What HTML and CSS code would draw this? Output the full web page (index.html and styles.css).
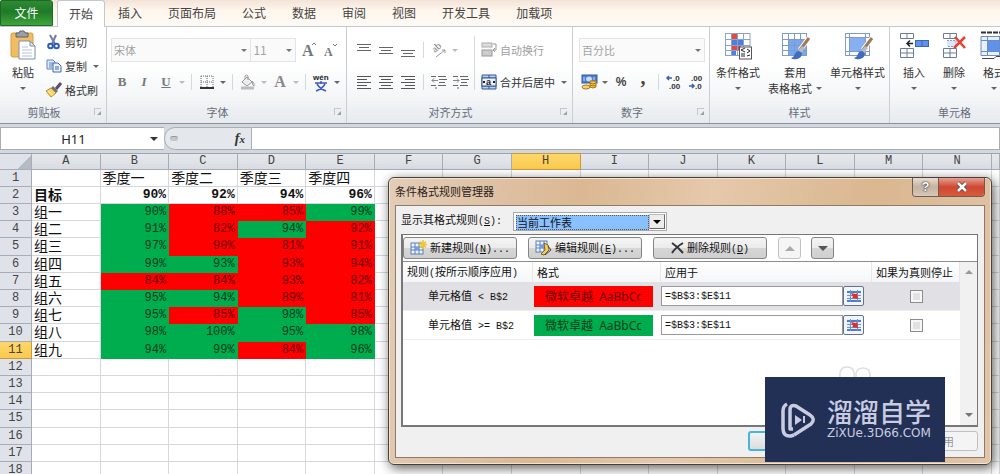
FILE: index.html
```html
<!DOCTYPE html>
<html lang="zh-CN">
<head>
<meta charset="utf-8">
<title>条件格式规则管理器</title>
<link rel="stylesheet" href="styles.css">
</head>
<body>
<nav class="tabs">
  <button class="tab tab-file">文件</button>
  <button class="tab tab-active">开始</button>
  <button class="tab">插入</button>
  <button class="tab">页面布局</button>
  <button class="tab">公式</button>
  <button class="tab">数据</button>
  <button class="tab">审阅</button>
  <button class="tab">视图</button>
  <button class="tab">开发工具</button>
  <button class="tab">加载项</button>
</nav>

<div class="ribbon">
  <section class="group g-clip">
    <div class="tools">
      <button class="big">
        <svg width="28" height="30" viewBox="0 0 28 30"><rect x="2" y="3" width="22" height="24" rx="2" fill="#f0bd62" stroke="#d79a3c"/><path d="M7 3h3l1-2h4l1 2h3v4H7z" fill="#9aa0a8" stroke="#5c636d"/><path d="M10 11h11l5 5v13H10z" fill="#fff" stroke="#7d8fae"/><path d="M21 11v5h5z" fill="#dfe7f4" stroke="#7d8fae"/><path d="M13 17h6M13 20h10M13 23h10M13 26h10" stroke="#b3c3de"/></svg>
        <span>粘贴</span><i class="caret"></i>
      </button>
      <div class="stack">
        <button class="item"><svg width="16" height="16" viewBox="0 0 16 16"><path d="M4 1l5 9M10 1L6 10" stroke="#6c7f9f" stroke-width="2"/><circle cx="4.500" cy="12" r="2.300" fill="none" stroke="#2c5cb4" stroke-width="2"/><circle cx="10.500" cy="12" r="2.300" fill="none" stroke="#2c5cb4" stroke-width="2"/></svg>剪切</button>
        <button class="item"><svg width="16" height="16" viewBox="0 0 16 16"><path d="M1 2h6l2 2v7H1z" fill="#dfeafc" stroke="#5f83c0"/><path d="M3 5h4M3 7h4M3 9h3" stroke="#5f83c0"/><path d="M7 5h5l3 3v6H7z" fill="#eef4ff" stroke="#3f68b0"/><path d="M9 9h4M9 11h4" stroke="#3f68b0"/></svg>复制<i class="caret"></i></button>
        <button class="item"><svg width="16" height="16" viewBox="0 0 16 16"><path d="M15 1l-5 6" stroke="#5b4a6e" stroke-width="3"/><path d="M7 4l5 5-2 2-5-5z" fill="#6d7280"/><path d="M5 6l5 5-5 4-5-6z" fill="#f5d667" stroke="#b98e2a"/><path d="M2 9l5 4" stroke="#fff3b8"/></svg>格式刷</button>
      </div>
    </div>
    <footer class="cap">剪贴板<i class="launch"></i></footer>
  </section>

  <section class="group g-font">
    <div class="tools rows">
      <div class="row">
        <div class="combo c-name"><select aria-label="字体" disabled><option>宋体</option></select></div>
        <div class="combo c-size"><select aria-label="字号" disabled><option>11</option></select></div>
        <button class="ib grow-a" aria-label="增大字号"><svg width="18" height="20" viewBox="0 0 18 20"><text class="serif" x="2" y="16" font-size="16">A</text><path d="M12 5l2-2 2 2" fill="none" stroke="#777"/></svg></button>
        <button class="ib" aria-label="减小字号"><svg width="16" height="20" viewBox="0 0 16 20"><text class="serif" x="1" y="16" font-size="12">A</text><path d="M10 4l2 2 2-2" fill="none" stroke="#777"/></svg></button>
      </div>
      <div class="row">
        <button class="ib letter b">B</button>
        <button class="ib letter i">I</button>
        <button class="ib letter u">U</button>
        <i class="caret cw dim"></i><i class="vs"></i>
        <button class="ib" aria-label="边框"><svg width="14" height="14" viewBox="0 0 14 14"><path d="M1 1h12M1 7h12M1 1v11M7 1v11M13 1v11" stroke="#666" stroke-dasharray="1 1" fill="none"/><path d="M0 13h14" stroke="#333" stroke-width="2"/></svg></button>
        <i class="caret cw"></i><i class="vs"></i>
        <button class="ib" aria-label="填充颜色"><svg width="16" height="16" viewBox="0 0 16 16"><path d="M2 8l5-5 5 5-5 4z" fill="#eee" stroke="#999"/><path d="M5 5V2q2-2 3 0v4M12 7q3 2 2 5-2-1-2-5" fill="none" stroke="#999"/><path d="M1 14h13" stroke="#bbb" stroke-width="3"/></svg></button>
        <i class="caret cw dim"></i>
        <button class="ib letter a">A</button>
        <i class="caret cw dim"></i><i class="vs"></i>
        <button class="ib" aria-label="拼音"><svg width="18" height="20" viewBox="0 0 18 20"><text class="pin" x="1" y="8" font-size="8">wén</text><path d="M3 11h12M9 9v3M5 12q3 5 9 7M13 12q-3 5-9 7" fill="none" stroke="#3c59c8" stroke-width="1.500"/></svg></button>
        <i class="caret cw"></i>
      </div>
    </div>
    <footer class="cap">字体<i class="launch"></i></footer>
  </section>

  <section class="group g-align">
    <div class="tools pair">
      <div class="rows">
        <div class="row">
          <button class="ib" aria-label="顶端对齐"><svg width="14" height="16" viewBox="0 0 14 16"><path d="M0 2.500h14M2 5.500h10M0 8.500h14" stroke="#666"/></svg></button>
          <button class="ib" aria-label="垂直居中"><svg width="14" height="16" viewBox="0 0 14 16"><path d="M0 5.500h14M2 8.500h10M0 11.500h14" stroke="#666"/></svg></button>
          <button class="ib" aria-label="底端对齐"><svg width="14" height="16" viewBox="0 0 14 16"><path d="M0 8.500h14M2 11.500h10M0 14.500h14" stroke="#666"/></svg></button>
          <i class="vs"></i>
          <button class="ib" aria-label="方向"><svg width="18" height="20" viewBox="0 0 18 20"><text class="ab" x="3" y="10" font-size="10" transform="rotate(-42 8 9)">ab</text><path d="M6 17l9-7m-3 0h3v3" fill="none" stroke="#999"/></svg></button>
          <i class="caret cw dim"></i>
        </div>
        <div class="row">
          <button class="ib" aria-label="左对齐"><svg width="14" height="14" viewBox="0 0 14 14"><path d="M0 1.500h14M0 4.500h10M0 7.500h14M0 10.500h10M0 13.500h14" stroke="#555"/></svg></button>
          <button class="ib" aria-label="居中"><svg width="14" height="14" viewBox="0 0 14 14"><path d="M0 1.500h14M2 4.500h10M0 7.500h14M2 10.500h10M0 13.500h14" stroke="#555"/></svg></button>
          <button class="ib" aria-label="右对齐"><svg width="14" height="14" viewBox="0 0 14 14"><path d="M0 1.500h14M4 4.500h10M0 7.500h14M4 10.500h10M0 13.500h14" stroke="#555"/></svg></button>
          <i class="vs"></i>
          <button class="ib" aria-label="减少缩进"><svg width="16" height="14" viewBox="0 0 16 14"><path d="M0 1.500h5M7 1.500h8M8 4.500h8M8 7.500h6M7 10.500h8M0 10.500h5M5 12v2" stroke="#666"/><path d="M7 5.500H1m2-2l-2 2 2 2" fill="none" stroke="#888"/></svg></button>
          <button class="ib" aria-label="增加缩进"><svg width="16" height="14" viewBox="0 0 16 14"><path d="M0 1.500h5M7 1.500h8M8 4.500h8M8 7.500h6M7 10.500h8M0 10.500h5M5 12v2" stroke="#666"/><path d="M0 5.500h6m-2-2l2 2-2 2" fill="none" stroke="#888"/></svg></button>
        </div>
      </div>
      <i class="tall"></i>
      <div class="rows">
        <button class="item off"><svg width="16" height="16" viewBox="0 0 16 16"><rect x="1" y="1" width="10" height="4" fill="#ddd" stroke="#aaa"/><rect x="1" y="8" width="10" height="6" fill="#ccc" stroke="#999"/><path d="M12 2h3v6h-3m2-2l-2 2 2 2" fill="none" stroke="#999"/></svg>自动换行</button>
        <button class="item"><svg width="16" height="16" viewBox="0 0 16 16"><path d="M1 1h14v14H1zM1 4h14M1 12h14M8 1v3M8 12v3" fill="#b9d0f0" stroke="#35598f"/><rect x="1" y="4" width="14" height="8" fill="#eaf2fd" stroke="#35598f"/><text class="pin" x="5" y="11" font-size="9">a</text><path d="M2 8h2M12 8h2" stroke="#222" stroke-width="2"/></svg>合并后居中<i class="caret"></i></button>
      </div>
    </div>
    <footer class="cap">对齐方式<i class="launch"></i></footer>
  </section>

  <section class="group g-num">
    <div class="tools rows">
      <div class="row"><div class="combo c-num"><select aria-label="数字格式" disabled><option>百分比</option></select></div></div>
      <div class="row">
        <button class="ib" aria-label="会计格式"><svg width="17" height="16" viewBox="0 0 17 16"><rect x="1" y="1" width="15" height="8" fill="#4f7ed0" stroke="#2f5aa8"/><ellipse cx="8" cy="5" rx="3" ry="2.500" fill="#c7dbf7"/><path d="M3 3v4M13 3v3" stroke="#c7dbf7"/><ellipse cx="5" cy="13" rx="4" ry="2" fill="#f7d36b" stroke="#a87918"/><path d="M9 7h6v6q-3 2-6 0z" fill="#f5c548" stroke="#a87918"/><path d="M9 9q3 2 6 0M9 11q3 2 6 0" fill="none" stroke="#a87918"/></svg></button>
        <i class="caret cw"></i>
        <button class="ib sym">%</button>
        <button class="ib sym comma">,</button>
        <i class="vs"></i>
        <button class="ib" aria-label="增加小数位数"><svg width="18" height="18" viewBox="0 0 18 18"><text class="dec" x="8" y="8" font-size="8">.0</text><text class="dec" x="4" y="16" font-size="8">.00</text><path d="M7 5H2m2-2L2 5l2 2" fill="none" stroke="#3263b8" stroke-width="1.500"/></svg></button>
        <button class="ib" aria-label="减少小数位数"><svg width="18" height="18" viewBox="0 0 18 18"><text class="dec" x="4" y="8" font-size="8">.00</text><text class="dec" x="8" y="16" font-size="8">.0</text><path d="M2 13h5m-2-2l2 2-2 2" fill="none" stroke="#3263b8" stroke-width="1.500"/></svg></button>
      </div>
    </div>
    <footer class="cap">数字<i class="launch"></i></footer>
  </section>

  <section class="group g-style">
    <div class="tools spread">
      <button class="big">
        <svg width="30" height="30" viewBox="0 0 30 30"><path d="M2 3h25v23H2z" fill="#fff"/><path d="M8 3h7v6H8zM8 15h10v5H8z" fill="#e5483c"/><path d="M8 9h12v6H8zM8 20h5v6H8z" fill="#4d7fe0"/><path d="M2.500 3v23M8.500 3v23M14.500 3v23M20.500 3v23M27 3v23M2 3.500h25M2 9.500h25M2 15.500h25M2 20.500h25M2 25.500h25" stroke="#8aa3cc" fill="none"/><rect x="16.500" y="17" width="12" height="12" fill="#fff" stroke="#555"/><path d="M22 18l-4 2 4 2M18 24h4M18 26h4M24 19l3 2-3 2M24 26l3-1" stroke="#222" fill="none"/></svg>
        <span>条件格式</span><i class="caret"></i>
      </button>
      <button class="big">
        <svg width="30" height="30" viewBox="0 0 30 30"><path d="M2 3h25v23H2z" fill="#fff"/><path d="M8 9h19v17H8z" fill="#79a7ee"/><path d="M2.500 3v23M8.500 3v23M14.500 3v23M20.500 3v23M26.500 3v23M2 3.500h25M2 9.500h25M2 15.500h25M2 20.500h25M2 25.500h25" stroke="#7f9bcb" fill="none"/><path d="M29 8L20 20" stroke="#fff" stroke-width="5"/><path d="M29 8L20 20" stroke="#a07a57" stroke-width="3"/><path d="M22 16l3 2-4 5-3-2z" fill="#bbb"/><path d="M11 28q3-1 4-4t4-3l3 2q0 5-5 6-4 1-6-1" fill="#3f6dc0"/></svg>
        <span>套用</span><span class="two">表格格式<i class="caret"></i></span>
      </button>
      <button class="big">
        <svg width="30" height="30" viewBox="0 0 30 30"><path d="M2 3h25v23H2z" fill="#fff"/><path d="M6 8h17v13H6z" fill="#86b0f2"/><path d="M2.500 3v23M6.500 3v23M22.500 3v23M26.500 3v23M2 3.500h25M2 7.500h25M2 21.500h25M2 25.500h25" stroke="#7f9bcb" fill="none"/><path d="M29 8L20 20" stroke="#fff" stroke-width="5"/><path d="M29 8L20 20" stroke="#a07a57" stroke-width="3"/><path d="M22 16l3 2-4 5-3-2z" fill="#bbb"/><path d="M11 28q3-1 4-4t4-3l3 2q0 5-5 6-4 1-6-1" fill="#3f6dc0"/></svg>
        <span>单元格样式</span><i class="caret"></i>
      </button>
    </div>
    <footer class="cap">样式</footer>
  </section>

  <section class="group g-cell">
    <div class="tools">
      <button class="big w40">
        <svg width="30" height="30" viewBox="0 0 30 30"><path d="M1.500 3.500h13v5h-13zM8 3.500v5M1.500 18.500h13v9h-13zM8 18.500v9M1.500 23h13" fill="#fff" stroke="#6b7c99"/><rect x="16.500" y="10.500" width="13" height="6" fill="#5f92ea" stroke="#3a66b5"/><path d="M23 11v5" stroke="#3a66b5"/><path d="M14 13.500H8m3-3l-3 3 3 3" fill="none" stroke="#222" stroke-width="1.500"/></svg>
        <span>插入</span><i class="caret"></i>
      </button>
      <button class="big w40">
        <svg width="30" height="30" viewBox="0 0 30 30"><path d="M4.500 3.500h13v5h-13zM11 3.500v5M4.500 18.500h13v9h-13zM11 18.500v9M4.500 23h13" fill="#fff" stroke="#6b7c99"/><path d="M8 10.500h9v6H8" fill="#dbe8fb" stroke="#7fa0d8" stroke-dasharray="2 1"/><path d="M16 7l10 11M26 7L15 18" stroke="#e8402f" stroke-width="2.500"/></svg>
        <span>删除</span><i class="caret"></i>
      </button>
      <button class="big w40">
        <svg width="30" height="30" viewBox="0 0 30 30"><path d="M2 2.500h26" stroke="#333" stroke-width="2" stroke-dasharray="5 1"/><path d="M2 6.500h27v19H2z" fill="#e9f1fd" stroke="#6b8cc4"/><rect x="9" y="10" width="11" height="11" fill="#5f92ea"/><path d="M8.500 6v20M20.500 6v20M2 10.500h27M2 21.500h27" stroke="#6b8cc4"/><path d="M3 28.500h12l2-2h8" stroke="#444" fill="none"/></svg>
        <span>格式</span><i class="caret"></i>
      </button>
    </div>
    <footer class="cap">单元格</footer>
  </section>
</div>

<div class="fbar">
  <div class="namebox"><input aria-label="名称框" value="H11"><i class="caret dark"></i></div>
  <div class="fx"><i class="knob"></i><button class="fxb">f<small>x</small></button></div>
  <input class="formula" aria-label="编辑栏">
</div>

<div class="sheet">
<table class="grid">
<colgroup><col class="rh"><col span="14"><col class="edge"></colgroup>
<thead><tr><th class="corner"><th>A<th>B<th>C<th>D<th>E<th>F<th>G<th class="sel">H<th>I<th>J<th>K<th>L<th>M<th>N<th></tr></thead>
<tbody>
<tr><th>1<td><td>季度一<td>季度二<td>季度三<td>季度四<td><td><td><td><td><td><td><td><td><td></tr>
<tr class="goal"><th>2<td>目标<td>90%<td>92%<td>94%<td>96%<td><td><td><td><td><td><td><td><td><td></tr>
<tr><th>3<td>组一<td class="g">90%<td class="r">88%<td class="r">85%<td class="g">99%<td><td><td><td><td><td><td><td><td><td></tr>
<tr><th>4<td>组二<td class="g">91%<td class="r">82%<td class="g">94%<td class="r">92%<td><td><td><td><td><td><td><td><td><td></tr>
<tr><th>5<td>组三<td class="g">97%<td class="r">90%<td class="r">81%<td class="r">91%<td><td><td><td><td><td><td><td><td><td></tr>
<tr><th>6<td>组四<td class="g">99%<td class="g">93%<td class="r">93%<td class="r">94%<td><td><td><td><td><td><td><td><td><td></tr>
<tr><th>7<td>组五<td class="r">84%<td class="r">84%<td class="r">93%<td class="r">82%<td><td><td><td><td><td><td><td><td><td></tr>
<tr><th>8<td>组六<td class="g">95%<td class="g">94%<td class="r">89%<td class="r">81%<td><td><td><td><td><td><td><td><td><td></tr>
<tr><th>9<td>组七<td class="g">95%<td class="r">85%<td class="g">98%<td class="r">85%<td><td><td><td><td><td><td><td><td><td></tr>
<tr><th>10<td>组八<td class="g">98%<td class="g">100%<td class="g">95%<td class="g">98%<td><td><td><td><td><td><td><td><td><td></tr>
<tr><th class="sel">11<td>组九<td class="g">94%<td class="g">99%<td class="r">84%<td class="g">96%<td><td><td><td><td><td><td><td><td><td></tr>
<tr><th>12<td><td><td><td><td><td><td><td><td><td><td><td><td><td><td></tr>
<tr><th>13<td><td><td><td><td><td><td><td><td><td><td><td><td><td><td></tr>
<tr><th>14<td><td><td><td><td><td><td><td><td><td><td><td><td><td><td></tr>
<tr><th>15<td><td><td><td><td><td><td><td><td><td><td><td><td><td><td></tr>
<tr><th>16<td><td><td><td><td><td><td><td><td><td><td><td><td><td><td></tr>
<tr><th>17<td><td><td><td><td><td><td><td><td><td><td><td><td><td><td></tr>
<tr><th>18<td><td><td><td><td><td><td><td><td><td><td><td><td><td><td></tr>
</tbody>
</table>
</div>

<div class="dialog" role="dialog" aria-labelledby="dlg-title">
  <header class="dtitle">
    <span id="dlg-title">条件格式规则管理器</span>
    <div class="winbtns"><button class="help">?</button><button class="close" aria-label="关闭"><svg width="12" height="10" viewBox="0 0 12 10"><path d="M2 1l8 8M10 1L2 9" stroke="#6b3a34" stroke-width="4"/><path d="M2 1l8 8M10 1L2 9" stroke="#fff" stroke-width="2.500"/></svg></button></div>
  </header>
  <div class="dbody">
    <div class="scope">
      <label for="scope">显示其格式规则<span class="lat">(<u>S</u>):</span></label>
      <div class="scopebox"><select id="scope"><option>当前工作表</option></select><i class="drop"></i></div>
    </div>
    <div class="panel">
      <div class="bar">
        <button class="btn"><svg width="17" height="16" viewBox="0 0 17 16"><rect x="1" y="3" width="12" height="11" fill="#eef4ff" stroke="#5d7fb8"/><path d="M1 7h12M1 10h12M5 3v11M9 3v11" stroke="#5d7fb8"/><path d="M5 7h4v3H5z" fill="#6f9be8"/><path d="M13 0v9M9 4.500h8M10 1.500l6 6M16 1.500l-6 6" stroke="#f4c430" stroke-width="1.500"/></svg><span>新建规则<span class="lat">(<u>N</u>)...</span></span></button>
        <button class="btn"><svg width="17" height="16" viewBox="0 0 17 16"><rect x="1" y="1" width="11" height="11" fill="#eef4ff" stroke="#5d7fb8"/><path d="M1 5h11M1 8h11M5 1v11M9 1v11" stroke="#5d7fb8"/><path d="M5 5h4v3H5z" fill="#6f9be8"/><path d="M9 3l4 2 1 5-5 5-3-1 4-4z" fill="#f5cf58" stroke="#7c6430"/><path d="M13 6l3 4-6 5" fill="none" stroke="#444"/></svg><span>编辑规则<span class="lat">(<u>E</u>)...</span></span></button>
        <button class="btn"><svg width="13" height="12" viewBox="0 0 13 12"><path d="M1 1q6 4 11 10M12 1Q5 5 1 11" fill="none" stroke="#333" stroke-width="2"/></svg><span>删除规则<span class="lat">(<u>D</u>)</span></span></button>
        <button class="btn sq up" aria-label="上移" disabled><i></i></button>
        <button class="btn sq down" aria-label="下移"><i></i></button>
      </div>
      <div class="list">
        <table class="rules">
          <colgroup><col class="k1"><col class="k2"><col class="k3"><col class="k4"></colgroup>
          <thead><tr><th>规则<span class="lat">(</span>按所示顺序应用<span class="lat">)</span></th><th>格式</th><th>应用于</th><th>如果为真则停止</th></tr></thead>
          <tbody>
            <tr class="on"><td class="cond">单元格值<span class="lat"> &lt; B$2</span></td><td><div class="sw red">微软卓越&nbsp; AaBbCc</div></td>
              <td><div class="ref"><input aria-label="应用于 1" value="=$B$3:$E$11"><button aria-label="选择区域 1"><svg width="14" height="12" viewBox="0 0 14 12"><rect width="14" height="12" fill="#e8f0fc"/><path d="M0 1h14v2H0zM0 10h14v2H0z" fill="#4b7dd0"/><path d="M0 5.500h14M0 8.500h14M3.500 0v12M10.500 0v12" stroke="#6b93d6"/><path d="M4 3l5 1 1-1 1 6-6-1 1-1z" fill="#e0301e"/></svg></button></div></td>
              <td class="stop"><input type="checkbox" aria-label="如果为真则停止 1"></td></tr>
            <tr><td class="cond">单元格值<span class="lat"> &gt;= B$2</span></td><td><div class="sw green">微软卓越&nbsp; AaBbCc</div></td>
              <td><div class="ref"><input aria-label="应用于 2" value="=$B$3:$E$11"><button aria-label="选择区域 2"><svg width="14" height="12" viewBox="0 0 14 12"><rect width="14" height="12" fill="#e8f0fc"/><path d="M0 1h14v2H0zM0 10h14v2H0z" fill="#4b7dd0"/><path d="M0 5.500h14M0 8.500h14M3.500 0v12M10.500 0v12" stroke="#6b93d6"/><path d="M4 3l5 1 1-1 1 6-6-1 1-1z" fill="#e0301e"/></svg></button></div></td>
              <td class="stop"><input type="checkbox" aria-label="如果为真则停止 2"></td></tr>
          </tbody>
        </table>
        <div class="scroll"><i class="su"></i><i class="sd"></i></div>
      </div>
    </div>
    <footer class="dfoot"><button class="ok" aria-label="确定"></button><button class="apply" disabled>应用</button></footer>
  </div>
</div>

<div class="mark">
  <svg class="ears" width="32" height="11" viewBox="0 0 32 11"><path d="M1 11Q0 1 8 1t7 10M17 11q-1-9 7-9t7 9" fill="none" stroke="#dedede" stroke-width="1.500"/></svg>
  <svg width="36" height="36" viewBox="0 0 36 36"><path d="M7 2Q3 4 3 9v17q0 9 8 8l3-1" fill="none" stroke="#c9cce0" stroke-width="3.500"/><path d="M13 27h-3V8q0-6 6-4l14 9q6 4 1 9L14 33" fill="none" stroke="#c9cce0" stroke-width="3.500" stroke-linejoin="round"/><path d="M15 13l7 5-7 5z" fill="#c9cce0"/><path d="M24 14v7" stroke="#c9cce0" stroke-width="2"/></svg>
  <div class="words"><strong>溜溜自学</strong><span>ZiXUe.3D66.COM</span></div>
</div>
</body>
</html>
```
FILE: styles.css
```css
* { box-sizing: border-box; }
html { height: 100%; }
body {
  margin: 0;
  height: 100vh;
  overflow: hidden;
  position: relative;
  display: flex;
  flex-direction: column;
  background: #d3d8df;
  color: #333;
  font: 11px/14px "Noto Sans CJK SC", sans-serif;
}
button, input, select { font: inherit; color: inherit; margin: 0; padding: 0; border: 0; background: none; border-radius: 0; }
i { font-style: normal; }
svg { display: block; flex: none; overflow: visible; }

/* ribbon tabs */
.tabs { display: flex; flex: none; height: 27px; background: linear-gradient(#f3e3d8, #fff6ec 40%, #fdfaf6); border-bottom: 1px solid #c3c8cf; }
.tab { padding: 0 13px; font-size: 12px; color: #444; }
.tab-file { width: 53px; color: #fff; border-radius: 2px 3px 0 0; background: linear-gradient(#2f8a35, #1f7a28 45%, #3fa53c); border: 1px solid #1c6a25; }
.tab-active { height: 27px; margin-left: 4px; padding: 0 11px; background: #fff; border: 1px solid #c3c8cf; border-bottom: 0; border-radius: 3px 3px 0 0; }

.ribbon { display: flex; flex: none; height: 97px; overflow: hidden; background: linear-gradient(#fff 40%, #f3f5f7 75%, #e6eaee); border-bottom: 1px solid #8b9199; }
.group { flex: none; display: flex; flex-direction: column; border-right: 1px solid #c9ced5; }
.g-clip { width: 107px; }
.g-font { width: 240px; }
.g-align { width: 226px; }
.g-num { width: 137px; }
.g-style { width: 180px; }
.g-cell { width: 130px; }
.tools { flex: 1; display: flex; padding: 3px 4px 0; }
.cap { position: relative; height: 20px; text-align: center; color: #666d78; padding: 2px 18px 0 0; }
.g-style .cap, .g-cell .cap { padding-right: 0; }
.launch { position: absolute; right: 5px; top: 5px; width: 7px; height: 7px; border: 1px solid #c4c8ce; border-right: 0; border-bottom: 0; }
.launch::after { content: ""; position: absolute; right: 0; bottom: 0; border: 2px solid #9aa0a8; border-top-color: transparent; border-left-color: transparent; }

.caret { flex: none; display: inline-block; width: 0; height: 0; border: 3px solid transparent; border-top-color: #666; border-bottom: 0; }
.caret.dim { border-top-color: #bbb; }
.caret.dark { border-width: 4px; border-bottom: 0; border-top-color: #333; }
.caret.cw { margin: 0 2px; }
.vs { flex: none; width: 1px; height: 16px; margin: 0 4px; background: #d5d8dc; }
.tall { flex: none; width: 1px; height: 54px; margin: 9px 6px 0 2px; background: #d5d8dc; }

.big { display: flex; flex-direction: column; align-items: center; white-space: nowrap; }
.big svg { margin-bottom: 5px; }
.big > .caret { margin-top: 8px; }
.two { display: flex; align-items: center; gap: 4px; margin-top: 2px; }
.w40 { width: 40px; }
.g-clip .big { width: 38px; }
.stack { display: flex; flex-direction: column; padding-left: 4px; }
.item { display: flex; align-items: center; gap: 3px; height: 24px; white-space: nowrap; }
.item .caret { margin-left: 3px; }
.off { color: #a0a0a0; }
.spread { justify-content: space-between; padding: 3px 4px 0 6px; }

.rows { display: flex; flex-direction: column; gap: 8px; }
.tools.rows { padding-top: 11px; }
.pair { padding: 0 6px; }
.pair > .rows { padding-top: 11px; }
.row { display: flex; align-items: center; height: 24px; }
.ib { flex: none; width: 22px; height: 22px; display: flex; align-items: center; justify-content: center; }
.grow-a { margin-left: 2px; }
.letter { font: bold 13px/22px "Liberation Serif", serif; color: #777; }
.letter.i { font-style: italic; }
.letter.u { text-decoration: underline; }
.letter.a { font-size: 16px; color: #888; }
.sym { font: bold 12px/22px "Liberation Sans", sans-serif; color: #444; }
.comma { font: bold 20px/12px "Liberation Serif", serif; align-items: flex-start; }
.serif { font-family: "Liberation Serif", serif; font-weight: bold; fill: #777; }
.pin { font-family: "Liberation Sans", sans-serif; font-weight: bold; fill: #222; }
.ab { font-family: "Liberation Serif", serif; fill: #777; }
.dec { font-family: "Liberation Sans", sans-serif; font-weight: bold; fill: #333; }

.combo { position: relative; height: 24px; border: 1px solid #e2e4e7; background: #fafafa; }
.combo select { appearance: none; width: 100%; height: 100%; padding: 0 2px; color: #a3a3a3; opacity: 1; }
.combo::after { content: ""; position: absolute; right: 3px; top: 10px; border: 3px solid transparent; border-top-color: #777; border-bottom: 0; }
.c-name { width: 145px; }
.c-size { width: 46px; border-left: 0; }
.c-size select { font-size: 12px; }
.c-num { width: 127px; margin-left: 1px; }
.g-num .tools { padding-left: 5px; }

/* formula bar */
.fbar { flex: none; display: flex; height: 26px; margin-top: 3px; padding-bottom: 3px; background: #d3d8df; }
.namebox { width: 164px; display: flex; align-items: center; background: #fff; border: 1px solid #a9aeb6; border-right: 0; padding-right: 6px; }
.namebox input { flex: 1; min-width: 0; padding-right: 4px; text-align: center; font: 13px/18px "Noto Sans", sans-serif; color: #222; background: none; }
.fx { width: 88px; display: flex; align-items: center; justify-content: space-between; padding: 0 6px 0 5px; background: #e4e7eb; border: 1px solid #a9aeb6; border-radius: 11px 0 0 11px; }
.knob { width: 8px; height: 5px; border-radius: 3px; background: #c2c6cc; border-top: 1px solid #999; }
.fxb { font: italic bold 14px/18px "Liberation Serif", serif; color: #333; }
.fxb small { font-size: 11px; }
.formula { flex: 1; min-width: 0; background: #fff; border: 1px solid #a9aeb6; border-left: 0; }

/* worksheet */
.sheet { flex: 1; min-height: 0; overflow: hidden; background: #fff; }
.grid { width: 100%; table-layout: fixed; border-collapse: separate; border-spacing: 0; font: 14px/14px "Noto Sans CJK SC", sans-serif; color: #111; }
.rh { width: 32px; }
.edge { width: 8px; }
.grid tr { height: 17px; }
.grid tbody tr:nth-child(5n) { height: 18px; }
.grid td, .grid th { padding: 0 2px; border-right: 1px solid #d4d7db; border-bottom: 1px solid #d4d7db; white-space: nowrap; vertical-align: top; }
.grid th { font: 12px/16px "Liberation Mono", monospace; color: #444; background: #dfe3e9; border-color: #a8adb5; padding: 0; }
.grid thead th { border-top: 1px solid #9ea4ad; line-height: 14px; background: linear-gradient(#e6e8ec, #d8dce2); }
.grid th.sel { background: linear-gradient(#fdd76a, #fbc94e); border-color: #c99a3c; }
.grid th.corner { background: linear-gradient(135deg, #dfe3e9 70%, #b6bbc3 70%); }
.grid .g, .grid .r { text-align: right; font: 12px/16px "Liberation Mono", monospace; }
.grid .g { background: #00ad4e; border-color: #00ad4e; color: #003d1b; }
.grid .r { background: #fe0000; border-color: #fe0000; color: #6b0000; }
.goal td { font-weight: bold; }
.goal td:nth-child(n+3) { text-align: right; font: bold 13px/16px "Liberation Mono", monospace; }

/* rule manager window */
.dialog { position: absolute; left: 388px; right: 8px; top: 177px; display: flex; flex-direction: column; padding: 0 6px 6px; border: 1px solid #4a4038; border-radius: 6px; background: linear-gradient(100deg, #e3cdb8, #dab892 30%, #e5c9ab 50%, #d9b78f 75%, #e2c5a8); box-shadow: inset 0 0 0 1px #f3e3d2, 2px 3px 12px rgba(0, 0, 0, .65); color: #111; }
.dtitle { display: flex; justify-content: space-between; height: 27px; color: #2b211a; line-height: 27px; }
.winbtns { display: flex; height: 19px; border: 1px solid #6c5d52; border-top: 0; border-radius: 0 0 4px 4px; overflow: hidden; }
.help { width: 26px; font: bold 13px/16px "Liberation Sans", sans-serif; color: #fff; text-shadow: 0 0 2px #222, 0 0 1px #222; background: linear-gradient(#eadccf, #c4b2a2 50%, #d8c8b8); border-right: 1px solid #6c5d52; }
.close { width: 45px; display: flex; align-items: center; justify-content: center; background: linear-gradient(#e6a193, #cf4832 50%, #d75b3c); }
.dbody { background: #f0f0f0; border: 1px solid #8c7a6a; padding: 6px 6px 6px 5px; }
.lat { font-family: "Liberation Mono", monospace; font-size: 10px; white-space: pre; }
.scope { display: flex; align-items: flex-start; gap: 11px; height: 22px; }
.scopebox { position: relative; width: 154px; height: 19px; padding: 2px; background: #fff; border: 1px solid #a9a9a9; }
.scopebox select { appearance: none; display: block; width: 133px; height: 15px; line-height: 15px; background: #89c0ff; outline: 1px dotted #555; outline-offset: -1px; padding-left: 1px; }
.drop { position: absolute; right: 1px; top: 1px; width: 16px; height: 15px; background: #ececec; border: 1px solid #666; border-top-color: #bbb; border-left-color: #bbb; pointer-events: none; }
.drop::after { content: ""; position: absolute; left: 3px; top: 5px; border: 4px solid transparent; border-top-color: #000; border-bottom: 0; }

.panel { height: 193px; display: flex; flex-direction: column; background: #fff; border: 1px solid #777; border-width: 1px 1px 2px 2px; }
.bar { display: flex; flex: none; height: 27px; padding: 2px 0; border-bottom: 1px solid #8c8c8c; }
.btn { width: 114px; margin-right: 11px; display: flex; align-items: center; justify-content: center; gap: 3px; background: linear-gradient(#f4f4f4, #ebebeb 50%, #d6d6d6 52%, #cfcfcf); border: 1px solid #858585; border-radius: 3px; white-space: nowrap; }
.sq { width: 23px; }
.sq i { border: 5px solid transparent; }
.sq.up { margin-right: 10px; background: #f5f5f5; border-color: #c2c2c2; }
.up i { border-top: 0; border-bottom-color: #aaa; }
.down i { border-bottom: 0; border-top-color: #555; }
.list { flex: 1; display: flex; }
.rules { flex: 1; align-self: flex-start; table-layout: fixed; border-collapse: separate; border-spacing: 0; width: 100%; }
.k1 { width: 130px; }
.k2 { width: 128px; }
.k4 { width: 88px; }
.rules tr { height: 29px; }
.rules thead tr { height: 20px; }
.rules th { text-align: left; font-weight: normal; padding: 0 4px; white-space: nowrap; background: linear-gradient(#fff, #f5f6f8); border-right: 1px solid #e6e8eb; }
.rules td { padding: 0; border-bottom: 1px solid #eee; }
.on td { background: #e0e0e5; }
.rules .cond { padding-left: 25px; white-space: nowrap; }
.sw { width: 119px; height: 21px; margin-left: 1px; text-align: center; font: 12px/21px "Noto Sans", "Noto Sans CJK SC", sans-serif; }
.red { background: #fe0000; color: #6b0000; }
.green { background: #00ad4e; color: #003d1b; }
.ref { display: flex; height: 20px; }
.ref input { flex: 1; min-width: 0; padding: 2px 0 0 3px; background: #fff; border: 1px solid #999; font: 10px/16px "Liberation Mono", monospace; }
.ref button { width: 21px; margin-right: 8px; display: flex; align-items: center; justify-content: center; background: #f2f5fa; border: 1px solid #66728a; border-radius: 2px; }
.stop { text-align: center; }
.stop input { appearance: none; display: block; width: 13px; height: 13px; margin: 0 auto; background: #e2e2e2; border: 1px solid #8c8c8c; box-shadow: inset 0 0 0 2px #f7f7f7; }
.scroll { flex: none; width: 17px; display: flex; flex-direction: column; justify-content: space-between; align-items: center; padding: 8px 0; background: #f1f1f1; }
.scroll i { border: 4px solid transparent; }
.scroll .su { border-top: 0; border-bottom-color: #999; }
.scroll .sd { border-bottom: 0; border-top-color: #777; }
.dfoot { display: flex; justify-content: flex-end; gap: 90px; padding-top: 4px; }
.dfoot button { width: 70px; height: 20px; border-radius: 3px; border: 1px solid #c0c0c0; background: #f4f4f4; color: #999; }
.dfoot .ok { border: 2px solid #45b5dc; background: linear-gradient(#f2f2f2, #ddd); }

/* brand plate */
.mark { position: absolute; right: 55px; bottom: 12px; width: 180px; height: 85px; display: flex; align-items: center; gap: 11px; padding-left: 15px; background: #223056; color: #c9cce0; }
.ears { position: absolute; left: 74px; bottom: 100%; }
.words { display: flex; flex-direction: column; padding-bottom: 4px; }
.words strong { font: 500 26px/30px "Noto Sans CJK SC", sans-serif; }
.words span { font: 12px/14px "DejaVu Sans", sans-serif; }
```
